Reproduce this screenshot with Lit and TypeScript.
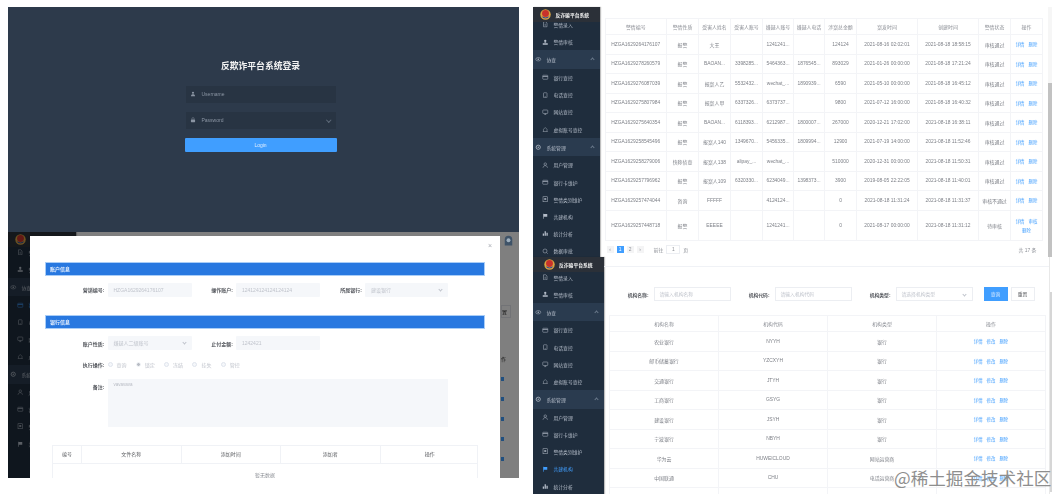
import {customElement, property} from "lit/decorators.js";
import {css, html, LitElement, svg} from "lit";

const FONT = css`"Liberation Sans", "Noto Sans CJK SC", sans-serif`;

const ICONS: Record<string, unknown> = {
    doc: svg`<path d="M3 1.5h4.5L10 4v7.5H3z" fill="none" stroke="currentColor"/><path d="M5 6.5h3M5 8.5h3" stroke="currentColor" stroke-width=".8"/>`,
    upload: svg`<circle cx="6.5" cy="3.8" r="2.3" fill="currentColor"/><path d="M1.5 8.5h10v3h-10zM4 7.5l2.5-2 2.5 2z" fill="currentColor"/>`,
    eye: svg`<ellipse cx="6.5" cy="6.5" rx="5" ry="3.4" fill="none" stroke="currentColor"/><circle cx="6.5" cy="6.5" r="1.5" fill="currentColor"/>`,
    card: svg`<rect x="1.5" y="2.5" width="10" height="8" rx="1" fill="none" stroke="currentColor"/><path d="M1.5 5h10" stroke="currentColor" stroke-width="1.4"/>`,
    phone: svg`<rect x="3" y="1.5" width="7" height="10" rx="1.2" fill="none" stroke="currentColor"/><path d="M5 9.8h3" stroke="currentColor"/>`,
    monitor: svg`<rect x="1.5" y="2" width="10" height="7" rx="1.2" fill="none" stroke="currentColor"/><path d="M4.5 11.2h4M6.5 9v2" stroke="currentColor"/>`,
    home: svg`<path d="M1.5 11h10M3 11V6.5l3.5-3.5L10 6.5V11" fill="none" stroke="currentColor" stroke-width=".9"/>`,
    gear: svg`<circle cx="6.5" cy="6.5" r="4.2" fill="none" stroke="currentColor" stroke-width="1.6"/><circle cx="6.5" cy="6.5" r="1.3" fill="currentColor"/>`,
    user: svg`<circle cx="6.5" cy="4.2" r="2.5" fill="none" stroke="currentColor"/><path d="M2 11.5c.6-3 2.4-4.2 4.5-4.2s3.9 1.2 4.5 4.2" fill="none" stroke="currentColor"/>`,
    form: svg`<rect x="2" y="1.5" width="9" height="10" fill="none" stroke="currentColor"/><rect x="4.5" y="4.5" width="4" height="3" fill="currentColor"/>`,
    flag: svg`<path d="M3 1.5v10" stroke="currentColor" stroke-width="1.2"/><path d="M3 2h7.5v5.5H3z" fill="currentColor"/>`,
    chart: svg`<path d="M1.5 7h2.6v4.5H1.5zM5.2 2.5h2.6v9H5.2zM8.9 5.5h2.6v6H8.9z" fill="currentColor"/>`,
    search: svg`<circle cx="6" cy="6" r="4" fill="none" stroke="currentColor"/><path d="M9 9l2.5 2.5" stroke="currentColor"/>`,
    lock: svg`<rect x="2" y="5.5" width="9" height="6" rx="1" fill="currentColor"/><path d="M4 5.5V3.8a2.5 2.5 0 015 0v1.7" fill="none" stroke="currentColor"/>`,
    person: svg`<circle cx="6.5" cy="3.8" r="2.4" fill="currentColor"/><path d="M2 11.5c0-3 2-4.4 4.5-4.4s4.5 1.4 4.5 4.4z" fill="currentColor"/>`,
};

function icon(name: string) {
    return html`<svg class="ico" viewBox="0 0 13 13">${ICONS[name]}</svg>`;
}

const EMBLEM = svg`
    <circle cx="8" cy="8" r="7.6" fill="#d9a441"/>
    <circle cx="8" cy="6.6" r="5" fill="#c8322b"/>
    <path d="M2.4 10.5a6.4 6.4 0 0011.2 0L8 12.2z" fill="#2f4f96"/>`;

interface NavRow {
    label: string;
    icon: string;
    group?: boolean;
}

const NAV_ROWS: NavRow[] = [
    {label: "警情录入", icon: "doc"},
    {label: "警情审核", icon: "upload"},
    {label: "协查", icon: "eye", group: true},
    {label: "银行查控", icon: "card"},
    {label: "电话查控", icon: "phone"},
    {label: "网站查控", icon: "monitor"},
    {label: "虚拟账号查控", icon: "home"},
    {label: "系统管理", icon: "gear", group: true},
    {label: "用户管理", icon: "user"},
    {label: "银行卡维护", icon: "card"},
    {label: "警情类别维护", icon: "form"},
    {label: "共建机构", icon: "flag"},
    {label: "统计分析", icon: "chart"},
    {label: "数据审批", icon: "search"},
];

@customElement("side-nav")
export class SideNav extends LitElement {
    @property() activeItem = "";
    @property({type: Number}) count = 14;

    protected override render() {
        return html`
            <div class="brand">
                <svg class="emblem" viewBox="0 0 16 16">${EMBLEM}</svg>
                <span>反诈骗平台系统</span>
            </div>
            <div class="rows">
                ${NAV_ROWS.slice(0, this.count).map((row) => html`
                    <div class="row ${row.group ? "group" : ""} ${row.label === this.activeItem ? "active" : ""}">
                        ${icon(row.icon)}<span>${row.label}</span>
                        ${row.group ? html`<i class="caret"></i>` : ""}
                    </div>
                `)}
            </div>
        `;
    }

    static override styles = css`
        :host {
            display: block;
            isolation: isolate;
            overflow: hidden;
            background: #1f2d3d;
            color: #b4bcc8;
            font: 4.8px ${FONT};
            box-shadow: 1px 0 1px rgba(0, 0, 0, 0.25);
        }
        .brand {
            position: relative;
            z-index: 1;
            display: flex;
            align-items: center;
            gap: var(--brand-gap, 5px);
            height: 15px;
            padding-left: var(--brand-pad, 6.5px);
            background: #2b3038;
            color: #f2f2f2;
            font-weight: 700;
        }
        .emblem {
            width: 11px;
            height: 11px;
        }
        .rows {
            margin-top: var(--rows-lift, -3.6px);
        }
        .row {
            display: flex;
            align-items: center;
            gap: 5px;
            height: 17.2px;
            padding-left: 9px;
        }
        .row.group {
            height: 18.6px;
            padding-left: 2px;
            background: #2a3b4f;
            position: relative;
        }
        .row.active {
            color: #409eff;
        }
        .ico {
            width: 6.5px;
            height: 6.5px;
            flex: none;
        }
        .caret {
            position: absolute;
            right: 6px;
            top: 8px;
            width: 2px;
            height: 2px;
            border-left: 0.5px solid #6b7a8c;
            border-top: 0.5px solid #6b7a8c;
            transform: rotate(45deg);
        }
    `;
}

const CASES = [
    ["HZGA1629264176107", "报警", "大王", "", "1241241...", "", "124124", "2021-08-16 02:02:01", "2021-08-18 18:58:15", "审核通过"],
    ["HZGA1629278260579", "报警", "BAOAN...", "3398285...", "5464363...", "1876545...", "893029", "2021-01-26 00:00:00", "2021-08-18 17:21:24", "审核通过"],
    ["HZGA1629276087039", "报警", "报案人乙", "5532432...", "wechat_...", "1890939...", "6590", "2021-05-10 00:00:00", "2021-08-18 16:45:12", "审核通过"],
    ["HZGA1629275807984", "报警", "报案人甲", "6337326...", "6373737...", "", "9800", "2021-07-12 16:00:00", "2021-08-18 16:40:32", "审核通过"],
    ["HZGA1629275640354", "报警", "BAOAN...", "6118393...", "6212987...", "1800007...", "267000", "2020-12-21 17:02:00", "2021-08-18 16:38:11", "审核通过"],
    ["HZGA1629258545496", "报警", "报案人140", "1349670...", "5456335...", "1809994...", "12900", "2021-07-19 14:00:00", "2021-08-18 11:52:46", "审核通过"],
    ["HZGA1629258279006", "快称侦查", "报案人138", "alipay_...", "wechat_...", "", "510000", "2020-12-31 00:00:00", "2021-08-18 11:50:31", "审核通过"],
    ["HZGA1629257796962", "报警", "报案人109", "6320330...", "6234049...", "1398373...", "3900", "2019-08-05 22:22:05", "2021-08-18 11:40:01", "审核通过"],
    ["HZGA1629257474044", "咨询", "FFFFF", "", "4124124...", "", "0", "2021-08-18 11:31:24", "2021-08-18 11:31:37", "审核不通过"],
    ["HZGA1629257448718", "报警", "EEEEE", "", "1241241...", "", "0", "2021-08-17 00:00:00", "2021-08-18 11:31:12", "待审核"],
];
const CASE_HEAD = ["警情编号", "警情性质", "受害人姓名", "受害人账号", "嫌疑人账号", "嫌疑人电话", "涉案总金额", "案发时间", "创建时间", "警情状态", "操作"];

const ORGS = [
    ["农业银行", "NYYH", "银行"],
    ["邮币储蓄银行", "YZCXYH", "银行"],
    ["交通银行", "JTYH", "银行"],
    ["工商银行", "GSYG", "银行"],
    ["建设银行", "JSYH", "银行"],
    ["宁波银行", "NBYH", "银行"],
    ["华为云", "HUWEICLOUD", "网站运营商"],
    ["中国联通", "CHU", "电话运营商"],
    ["中国移动", "CHM", "电话运营商"],
];

@customElement("app-root")
export class AppRoot extends LitElement {
    private renderLogin() {
        return html`
            <section class="login">
                <h1>反欺诈平台系统登录</h1>
                <div class="login-field">${icon("person")}<span>Username</span></div>
                <div class="login-field">${icon("lock")}<span>Password</span><i class="chev"></i></div>
                <div class="login-btn">Login</div>
            </section>
        `;
    }

    private renderModal() {
        return html`
            <section class="dim-panel">
                <side-nav class="dim-nav" activeItem="银行查控" .count=${12}></side-nav>
                <div class="dim-peek">
                    <span class="peek-btn">置</span>
                    <span class="peek-th">作</span>
                    ${[0, 1, 2, 3, 4].map(() => html`<i></i>`)}
                </div>
                <div class="mask"></div>
                <svg class="avatar" viewBox="0 0 12 14">
                    <path d="M1 13V5a5 5 0 0110 0v8z" fill="#3f5368"/>
                    <circle cx="6" cy="6" r="2.6" fill="#9fb0bf"/>
                </svg>
                <div class="modal">
                    <span class="close">×</span>
                    <div class="bar">账户信息</div>
                    <div class="fields first">
                        <label>营销编号:</label><div class="inp">HZGA1629264176107</div>
                        <label>操作账户:</label><div class="inp">124124124124124124</div>
                        <label>所属银行:</label><div class="inp sel">建设银行</div>
                    </div>
                    <div class="bar">银行信息</div>
                    <div class="fields second">
                        <label>账户性质:</label><div class="inp sel">嫌疑人二级账号</div>
                        <label>止付金额:</label><div class="inp">1242421</div>
                    </div>
                    <div class="radios">
                        <label>执行操作:</label>
                        ${["查询", "锁定", "冻结", "挂失", "管控"].map((t, i) => html`
                            <span class="radio ${i === 1 ? "on" : ""}"><i></i>${t}</span>
                        `)}
                    </div>
                    <div class="note">
                        <label>备注:</label>
                        <div class="area">vavavava</div>
                    </div>
                    <div class="files">
                        <div class="files-head">
                            <span>编号</span><span>文件名称</span><span>添加时间</span><span>添加者</span><span>操作</span>
                        </div>
                        <div class="files-empty">暂无数据</div>
                    </div>
                </div>
            </section>
        `;
    }

    private renderCases() {
        return html`
            <section class="shot cases">
                <side-nav></side-nav>
                <div class="body">
                    <div class="grid case-grid">
                        ${CASE_HEAD.map((h) => html`<div class="th">${h}</div>`)}
                        ${CASES.map((row, i) => html`
                            ${row.map((c) => html`<div class="td">${c}</div>`)}
                            <div class="td links">
                                <a>详情</a>${i === 9 ? html`<a>审核</a>` : ""}<a>删除</a>
                            </div>
                        `)}
                    </div>
                    <div class="pager">
                        <i class="pg">‹</i><i class="pg cur">1</i><i class="pg">2</i><i class="pg">›</i>
                        <span class="goto">前往</span><i class="pg box">1</i><span>页</span>
                        <span class="total">共 17 条</span>
                    </div>
                    <div class="scroll"><i></i></div>
                </div>
            </section>
        `;
    }

    private renderOrgs() {
        return html`
            <section class="shot orgs">
                <side-nav activeItem="共建机构" .count=${13}></side-nav>
                <div class="body">
                    <div class="topline"></div>
                    <div class="filters">
                        <label>机构名称:</label><div class="f-inp">请输入机构名称</div>
                        <label>机构代码:</label><div class="f-inp">请输入机构代码</div>
                        <label>机构类型:</label><div class="f-inp sel">请选择机构类型</div>
                        <div class="btn primary">查询</div>
                        <div class="btn">重置</div>
                    </div>
                    <div class="grid org-grid">
                        ${["机构名称", "机构代码", "机构类型", "操作"].map((h) => html`<div class="th">${h}</div>`)}
                        ${ORGS.map((row) => html`
                            ${row.map((c) => html`<div class="td">${c}</div>`)}
                            <div class="td links"><a>详情</a><a>修改</a><a>删除</a></div>
                        `)}
                    </div>
                    <div class="scroll"><i></i></div>
                </div>
            </section>
        `;
    }

    protected override render() {
        return html`
            <div class="page">
                <div class="col left">
                    ${this.renderLogin()}
                    ${this.renderModal()}
                </div>
                <div class="col right">
                    ${this.renderCases()}
                    ${this.renderOrgs()}
                </div>
                <span class="watermark">@稀土掘金技术社区</span>
            </div>
        `;
    }

    static override styles = css`
        :host {
            display: block;
            font-family: ${FONT};
        }
        .page {
            position: relative;
            display: grid;
            grid-template-columns: 511px 519px;
            column-gap: 14px;
            box-sizing: border-box;
            width: 1062px;
            height: 494px;
            padding: 7px 0 0 8px;
            overflow: hidden;
            background: #fff;
        }
        .col {
            display: flex;
            flex-direction: column;
        }
        section {
            filter: blur(0.7px);
        }

        /* login */
        .login {
            display: flex;
            flex-direction: column;
            align-items: center;
            box-sizing: border-box;
            height: 225px;
            padding: 52.5px 6px 0 0;
            background: #2d3a4b;
        }
        .login h1 {
            margin: 0 0 13px;
            font-size: 8.8px;
            line-height: 13px;
            color: #f4f4f4;
        }
        .login-field {
            display: flex;
            align-items: center;
            gap: 6px;
            box-sizing: border-box;
            width: 150px;
            height: 17.5px;
            margin-bottom: 8.5px;
            padding-left: 4px;
            background: #283443;
            color: #8b95a3;
            font-size: 5px;
        }
        .login-field .ico {
            width: 6px;
            height: 6px;
        }
        .login-field span {
            flex: 1;
        }
        .chev {
            width: 2.5px;
            height: 2.5px;
            margin: 0 5px 2px 0;
            border-right: 0.5px solid #5f6b7a;
            border-bottom: 0.5px solid #5f6b7a;
            transform: rotate(45deg);
        }
        .login-btn {
            width: 152px;
            height: 14px;
            line-height: 14px;
            border-radius: 1px;
            text-align: center;
            background: #409eff;
            color: #dcecff;
            font-size: 5px;
        }

        /* dimmed modal shot */
        .dim-panel {
            position: relative;
            display: flex;
            height: 246px;
            background: #fff;
            overflow: hidden;
        }
        .dim-nav {
            width: 68px;
            height: 100%;
        }
        .dim-peek {
            position: absolute;
            left: 493px;
            top: 73px;
            display: flex;
            flex-direction: column;
            align-items: flex-start;
            gap: 16px;
            font-size: 5px;
            color: #222;
        }
        .peek-btn {
            box-sizing: border-box;
            width: 10px;
            height: 13px;
            line-height: 13px;
            margin-bottom: 22px;
            text-align: right;
            padding-right: 3px;
            border: 0.5px solid #e4e7ed;
        }
        .peek-th {
            margin: 0 0 -1px;
            line-height: 6px;
        }
        .dim-peek i {
            width: 3px;
            height: 4px;
            background: #409eff;
        }
        .mask {
            position: absolute;
            inset: 0;
            background: rgba(0, 0, 0, 0.5);
        }
        .avatar {
            position: absolute;
            left: 496px;
            top: 3px;
            width: 9px;
            height: 12px;
        }
        .modal {
            position: absolute;
            left: 22px;
            top: 3.5px;
            right: 19px;
            bottom: 0;
            box-sizing: border-box;
            padding: 26px 15px 0;
            background: #fff;
            font-size: 5px;
            color: #606266;
        }
        .close {
            position: absolute;
            right: 8px;
            top: 6px;
            color: #a9acb3;
            font-size: 7px;
        }
        .bar {
            box-sizing: border-box;
            height: 14px;
            line-height: 12px;
            padding-left: 4px;
            border: 1px solid #a9cdf7;
            background: #2878e0;
            color: #e8f1fd;
            font-weight: 700;
        }
        .fields {
            display: grid;
            align-items: center;
            height: 14px;
        }
        .fields.first {
            margin: 7px 0 18.5px;
            grid-template-columns: 62.5px 84.5px 44px 84px 45px 83px;
        }
        .fields.second {
            margin: 7px 0 0;
            grid-template-columns: 62.5px 84.5px 44px 84px;
        }
        .modal label {
            padding-right: 3px;
            text-align: right;
            font-weight: 700;
            color: #55585e;
        }
        .inp {
            position: relative;
            height: 14px;
            line-height: 14px;
            padding-left: 6px;
            border-radius: 1px;
            background: #f5f7fa;
            color: #c0c4cc;
        }
        .sel::after {
            content: "";
            position: absolute;
            right: 6px;
            top: 5px;
            width: 2px;
            height: 2px;
            border-right: 0.5px solid #c0c4cc;
            border-bottom: 0.5px solid #c0c4cc;
            transform: rotate(45deg);
        }
        .radios {
            display: grid;
            grid-template-columns: 62.5px repeat(5, 28.3px);
            align-items: center;
            height: 8px;
            margin-top: 10px;
            color: #c0c4cc;
        }
        .radio {
            display: flex;
            align-items: center;
            gap: 4px;
        }
        .radio i {
            box-sizing: border-box;
            width: 5px;
            height: 5px;
            border: 0.5px solid #dfe4ed;
            border-radius: 50%;
            background: #f5f7fa;
        }
        .radio.on i {
            border: 1.6px solid #f5f7fa;
            background: #b8bcc4;
        }
        .note {
            display: grid;
            grid-template-columns: 62.5px 340.5px;
            margin-top: 11px;
        }
        .note label {
            padding-top: 4px;
        }
        .area {
            height: 48px;
            padding: 3px 6px;
            box-sizing: border-box;
            background: #f5f7fa;
            color: #b8bcc4;
            font-size: 4.5px;
        }
        .files {
            margin: 18px 7px 0;
            border: 0.5px solid #f0f2f6;
            text-align: center;
            height: 60px;
        }
        .files-head {
            display: grid;
            grid-template-columns: 28px 99.5px 99.5px 99.5px 99.5px;
            height: 17px;
            line-height: 17px;
            border-bottom: 0.5px solid #f0f2f6;
        }
        .files-head span + span {
            border-left: 0.5px solid #f0f2f6;
        }
        .files-empty {
            padding-top: 7px;
            color: #909399;
        }

        /* white table shots */
        .shot {
            position: relative;
            display: flex;
            background: #fff;
            font-size: 4.9px;
            color: #7c7f86;
        }
        .cases {
            height: 250px;
        }
        .cases side-nav {
            width: 66.5px;
            --rows-lift: -6px;
        }
        .orgs {
            height: 237px;
        }
        .orgs side-nav {
            width: 71px;
            --brand-pad: 11px;
            --brand-gap: 4px;
        }
        .body {
            position: relative;
            flex: 1;
            overflow: hidden;
        }
        .cases .body {
            padding: 11px 0 0 5px;
        }
        .orgs .body {
            padding: 9px 0 0 5px;
        }
        .grid {
            display: grid;
            border-top: 0.5px solid #f3f4f7;
            border-left: 0.5px solid #f3f4f7;
        }
        .case-grid {
            width: 437.5px;
            grid-template-columns: 61.5px 32px 32px 32px 31px 31px 32px 61px 61px 32px 32px;
            grid-template-rows: 16px repeat(9, 19.5px) 30.5px;
        }
        .org-grid {
            width: 436px;
            grid-template-columns: repeat(4, 109px);
            grid-template-rows: 16px repeat(9, 19.5px);
        }
        .th,
        .td {
            display: flex;
            flex-wrap: wrap;
            align-items: center;
            justify-content: center;
            align-content: center;
            overflow: hidden;
            white-space: nowrap;
            border-right: 0.5px solid #f3f4f7;
            border-bottom: 0.5px solid #f3f4f7;
        }
        .th {
            color: #8b8e95;
        }
        .links {
            column-gap: 4px;
            row-gap: 3px;
            color: #409eff;
            font-size: 4.4px;
        }
        .pager {
            display: flex;
            align-items: center;
            gap: 3px;
            height: 8px;
            margin-top: 4px;
            padding-left: 2px;
            box-sizing: border-box;
            width: 437px;
            color: #8b8e95;
        }
        .pg {
            width: 7px;
            height: 7px;
            line-height: 7px;
            font-style: normal;
            text-align: center;
            background: #f4f4f5;
        }
        .pg.cur {
            background: #409eff;
            color: #fff;
        }
        .pg.box {
            width: 12px;
            background: #fff;
            border: 0.5px solid #eceef2;
        }
        .goto {
            margin-left: 7px;
        }
        .total {
            margin-left: auto;
            padding-right: 5px;
        }
        .scroll {
            position: absolute;
            top: 0;
            right: 0;
            bottom: 0;
            width: 4px;
            background: #f6f6f6;
        }
        .scroll i {
            display: block;
            height: 174px;
            margin-top: 76px;
            background: #c2c2c2;
        }
        .orgs .scroll {
            width: 2px;
            background: #fff;
            border-left: 0.5px solid #e8e8e8;
        }
        .orgs .scroll i {
            height: 200px;
            margin-top: 35px;
            background: #d6d6d6;
        }
        .topline {
            position: absolute;
            left: 0;
            right: 0;
            top: 9px;
            border-top: 0.5px solid #f0f2f6;
        }
        .filters {
            display: flex;
            align-items: center;
            height: 14px;
            margin: 21px 0 14px;
            font-size: 4.8px;
        }
        .filters label {
            width: 40px;
            padding-right: 5px;
            box-sizing: border-box;
            text-align: right;
            color: #55585e;
            font-weight: 700;
        }
        .filters label:first-child {
            width: 44.5px;
        }
        .f-inp {
            position: relative;
            box-sizing: border-box;
            width: 77px;
            height: 14px;
            line-height: 13px;
            margin-right: 4px;
            padding-left: 5px;
            border: 0.5px solid #eceef2;
            color: #c0c4cc;
        }
        .btn {
            box-sizing: border-box;
            width: 24px;
            height: 14px;
            line-height: 13px;
            text-align: center;
            margin-left: 3px;
            border: 0.5px solid #eceef2;
            color: #606266;
        }
        .btn.primary {
            margin-left: 7px;
            background: #409eff;
            border-color: #409eff;
            color: #dcecff;
        }
        .watermark {
            position: absolute;
            left: 894px;
            top: 466px;
            font: 17.6px "Noto Sans CJK SC", sans-serif;
            line-height: 24px;
            white-space: nowrap;
            color: #8e8e8e;
        }
    `;
}

declare global {
    interface HTMLElementTagNameMap {
        "app-root": AppRoot;
        "side-nav": SideNav;
    }
}
